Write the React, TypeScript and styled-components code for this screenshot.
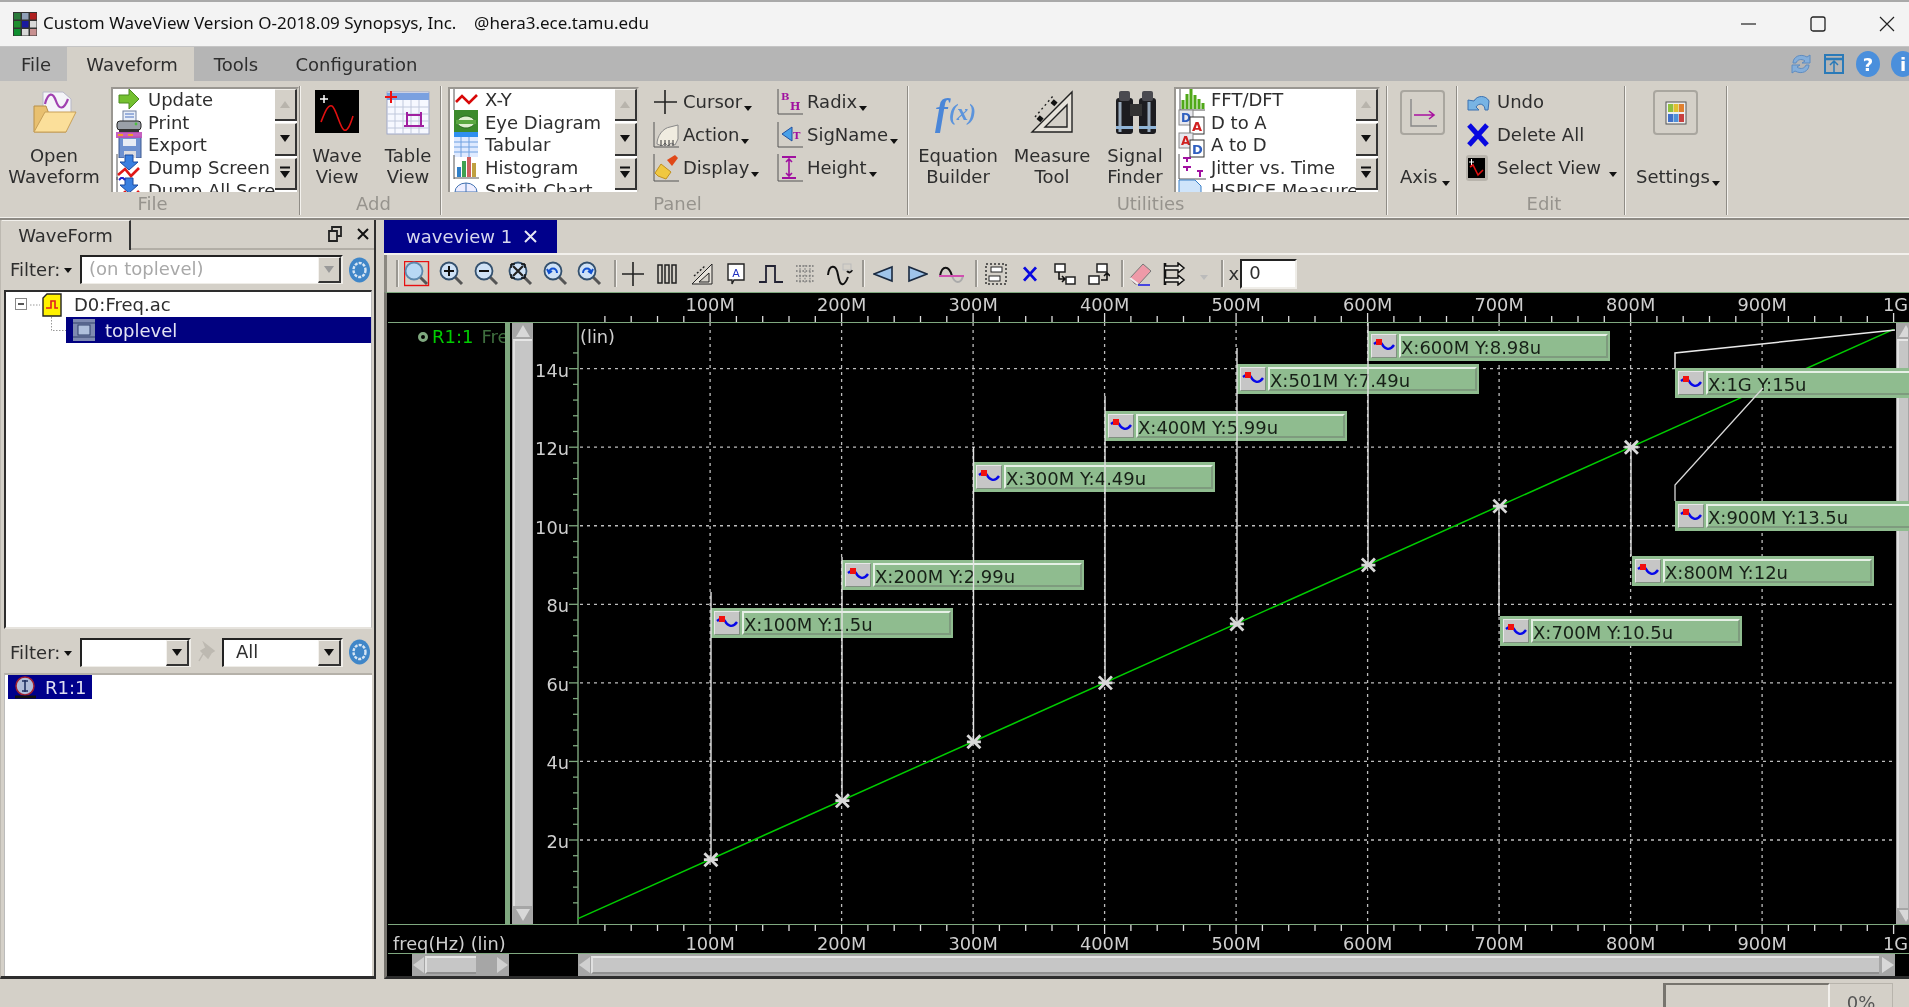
import React from "react";
import styled, { createGlobalStyle } from "styled-components";

const Global = createGlobalStyle`
  html, body { margin: 0; padding: 0; width: 1909px; height: 1007px; overflow: hidden; background: #d4d0c8; }
  #root { width: 1909px; height: 1007px; }
  * { box-sizing: border-box; }
`;

const FONT = `"DejaVu Sans", "Liberation Sans", sans-serif`;

const Win = styled.div`
  width: 1909px; height: 1007px; display: flex; flex-direction: column; overflow: hidden;
  background: #d4d0c8; font-family: ${FONT}; font-size: 18px; color: #2e2e2e; filter: blur(0.3px);
`;
const TitleBar = styled.div`
  height: 47px; flex: none; background: #f3f3f3; border-top: 2px solid #a9a9a9; border-bottom: 1px solid #c4c4c4;
  display: flex; align-items: center; padding: 0 10px 0 13px; color: #111;
  font-family: "Noto Sans", sans-serif; font-size: 17px;
`;
const TitleText = styled.span` margin-left: 6px; white-space: pre; padding-bottom: 3px; `;
const WinControls = styled.div` margin-left: auto; display: flex; align-items: center; gap: 45px; `;
const WinBtn = styled.div` width: 24px; height: 30px; display: flex; align-items: center; justify-content: center; `;

const MenuBar = styled.div` height: 34px; flex: none; background: #b5b5b5; display: flex; align-items: stretch; position: relative; `;
const MenuTab = styled.div<{ $w: number; $pl?: number; $active?: boolean; $first?: boolean }>`
  width: ${p => p.$w}px; display: flex; align-items: center; justify-content: center; flex: none;
  padding-left: ${p => p.$pl ?? 0}px;
  background: ${p => (p.$active ? "#d4d0c8" : p.$first ? "#bcbcbc" : "transparent")};
`;
const MenuIcons = styled.div` margin-left: auto; display: flex; align-items: center; gap: 11px; margin-right: -6px; `;

const Ribbon = styled.div` height: 139px; flex: none; display: flex; border-bottom: 2px solid #8d8a84; box-shadow: inset 0 -1px 0 #f2f0ec; `;
const Group = styled.div<{ $w: number; $pad?: number }>`
  width: ${p => p.$w}px; flex: none; position: relative; display: flex; flex-direction: column; padding-top: 6px;
  &::after { content: ""; position: absolute; right: 0; top: 5px; bottom: 3px; width: 2px; background: linear-gradient(90deg, #8f8c86 50%, #f4f2ee 50%); }
`;
const GroupBody = styled.div<{ $pad?: number; $gap?: number }>`
  height: 106px; display: flex; align-items: flex-start; padding-left: ${p => p.$pad ?? 0}px; gap: ${p => p.$gap ?? 0}px;
`;
const Caption = styled.div` height: 22px; text-align: center; color: #96938d; line-height: 22px; padding-left: 4px; `;
const BigBtn = styled.div<{ $w: number; $ml?: number }>`
  width: ${p => p.$w}px; margin-left: ${p => p.$ml ?? 0}px; flex: none; display: flex; flex-direction: column; align-items: center;
`;
const BigIcon = styled.div` height: 58px; padding-top: 3px; display: flex; justify-content: center; `;
const BigLabel = styled.div` line-height: 21px; text-align: center; white-space: nowrap; `;

const ListBox = styled.div<{ $w: number; $ml?: number }>`
  width: ${p => p.$w}px; margin-left: ${p => p.$ml ?? 0}px; height: 105px; flex: none; display: flex; background: #fff;
  border-top: 2px solid #9a9791; border-left: 2px solid #9a9791; border-right: 2px solid #cfcbc3; overflow: hidden;
`;
const ListItems = styled.div` flex: 1; min-width: 0; overflow: hidden; padding-left: 3px; margin-top: -1px; `;
const ListRow = styled.div` height: 22.7px; display: flex; align-items: center; gap: 6px; white-space: nowrap; overflow: visible; `;
const RowIcon = styled.div` width: 26px; height: 24px; flex: none; display: flex; align-items: center; justify-content: center; `;
const ListScroll = styled.div` width: 22px; flex: none; display: flex; flex-direction: column; background: #fff; `;
const ScrollBtn = styled.div`
  flex: 1; background: #d4d0c8; border-right: 2px solid #333; border-bottom: 2px solid #333; border-top: 1px solid #f0eee9;
  margin-bottom: 2px; display: flex; align-items: center; justify-content: center;
`;

const SmallGrid = styled.div` display: grid; grid-template-columns: 124px 110px; grid-auto-rows: 33px; margin: -2px 0 0 14px; `;
const SmallCol = styled.div` display: grid; grid-auto-rows: 33px; margin-top: -2px; `;
const SmallItem = styled.div` display: flex; align-items: center; white-space: nowrap; `;
const SmallIcon = styled.div<{ $w?: number }>` width: ${p => p.$w ?? 30}px; flex: none; height: 26px; display: flex; align-items: center; `;
const Caret = styled.i<{ $ml?: number }>`
  display: inline-block; width: 0; height: 0; margin-left: ${p => p.$ml ?? 2}px; margin-top: 13px; flex: none;
  border-left: 4px solid transparent; border-right: 4px solid transparent; border-top: 5px solid #111;
`;
const FilterCaret = styled(Caret)` margin-top: 2px; `;
const FrameBtn = styled.div`
  width: 45px; height: 45px; border: 2px solid #a9a69f; border-radius: 4px; display: flex; align-items: center; justify-content: center;
`;
const TextWithCaret = styled.div<{ $ml: number }>` display: flex; align-items: center; margin-left: ${p => p.$ml}px; margin-top: 31px; line-height: 21px; white-space: nowrap; `;
const FrameWrap = styled.div<{ $ml: number }>` margin-left: ${p => p.$ml}px; margin-top: 3px; `;

const Main = styled.div` flex: 1; min-height: 0; display: flex; `;
const Dock = styled.div`
  width: 376px; flex: none; display: flex; flex-direction: column; border-right: 2px solid #2d2d2d; border-bottom: 3px solid #2d2d2d;
  border-left: 1px solid #bdb9b1;
`;
const DockHead = styled.div` height: 30px; flex: none; display: flex; align-items: stretch; position: relative; padding-left: 1px; `;
const DockTab = styled.div` width: 129px; display: flex; align-items: center; justify-content: center; border-right: 2px solid #333; border-top: 1px solid #f2f0ec; `;
const DockIcons = styled.div` flex: 1; display: flex; align-items: center; justify-content: flex-end; gap: 14px; padding-right: 4px; border-bottom: 2px solid #b2aea6; `;
const FilterRow = styled.div<{ $h: number; $top: number }>`
  height: ${p => p.$h}px; flex: none; display: flex; align-items: center; padding: ${p => p.$top}px 0 0 9px;
`;
const FilterLabel = styled.div` width: 56px; flex: none; display: flex; align-items: center; `;
const FilterText = styled.span``;
const Combo = styled.div<{ $w: number; $disabled?: boolean; $ml?: number }>`
  width: ${p => p.$w}px; height: 29px; flex: none; margin-left: ${p => p.$ml ?? 14}px; display: flex; background: #fff;
  border-top: 2px solid #222; border-left: 2px solid #222; border-bottom: 1px solid #efede8; border-right: 2px solid #efede8;
`;
const ComboText = styled.div<{ $dim?: boolean; $pl?: number }>` flex: 1; padding-left: ${p => p.$pl ?? 7}px; line-height: 24px; color: ${p => (p.$dim ? "#a8a8a8" : "#2e2e2e")}; white-space: nowrap; overflow: hidden; `;
const ComboBtn = styled.div`
  width: 23px; flex: none; background: #d4d0c8; display: flex; align-items: center; justify-content: center;
  border-right: 2px solid #333; border-bottom: 2px solid #333; border-top: 1px solid #f4f2ee; border-left: 1px solid #f4f2ee;
`;
const Gear = styled.div` margin-left: 6px; flex: none; display: flex; `;
const PinSlot = styled.div` width: 31px; flex: none; display: flex; justify-content: center; `;

const TreePane = styled.div`
  height: 339px; flex: none; margin: 5px 2px 0 3px; background: #fff; border-top: 2px solid #2d2d2d; border-left: 2px solid #2d2d2d;
  border-right: 1px solid #bbb; border-bottom: 2px solid #e6e3dd; position: relative;
`;
const TreeItem = styled.div` display: flex; margin-left: 45px; `;
const TreeRow = styled.div`
  flex: 1; height: 26px; display: flex; align-items: center; gap: 10px;
  background: #000080; color: #e2e2f4; padding-left: 7px;
`;
const TreeHead = styled.div` height: 25px; display: flex; align-items: center; padding-left: 9px; gap: 2px; `;
const TreeName = styled.span` margin-left: 10px; `;
const ListPane = styled.div`
  flex: 1; min-height: 0; margin: 3px 2px 0 3px; background: #fff; border-top: 2px solid #b5b1a9; border-left: 1px solid #bbb; padding: 0 0 0 3px;
`;
const Chip = styled.div`
  width: 84px; height: 24px; background: #00008b; color: #dfdff2; display: flex; align-items: center; padding-left: 7px; gap: 9px;
`;

const Right = styled.div` flex: 1; min-width: 0; margin-left: 8px; display: flex; flex-direction: column; `;
const TabStrip = styled.div` height: 35px; flex: none; border-bottom: 2px solid #f2f0ec; `;
const ViewTab = styled.div`
  width: 173px; height: 33px; background: #00008b; color: #d7d7ee; display: flex; align-items: center; padding-left: 22px; gap: 12px; white-space: nowrap;
`;
const Toolbar = styled.div` height: 37px; flex: none; display: flex; align-items: center; padding-left: 9px; border-left: 3px solid #8a8780; `;
const ToolSep = styled.div<{ $mr: number; $ml?: number }>`
  width: 2px; height: 27px; flex: none; background: #9a9791; box-shadow: 1px 0 0 #f2f0ec; margin-right: ${p => p.$mr}px; margin-left: ${p => p.$ml ?? 0}px;
`;
const Tool = styled.div<{ $w?: number }>` width: ${p => p.$w ?? 34.5}px; height: 30px; flex: none; display: flex; align-items: center; justify-content: center; `;
const XBox = styled.div`
  width: 57px; height: 30px; flex: none; background: #fff; margin-left: 1px; padding-left: 7px; line-height: 24px;
  border-top: 2px solid #222; border-left: 2px solid #222; border-bottom: 2px solid #efede8; border-right: 2px solid #efede8;
`;
const XMark = styled.span` margin-left: 6px; `;

const Plot = styled.div`
  flex: 1; min-height: 0; position: relative; display: flex; flex-direction: column; background: #000; overflow: hidden;
  border-left: 3px solid #77746e; border-bottom: 3px solid #2d2d2d; border-top: 1px solid #7fa87f;
`;
const PlotInner = styled.div` flex: 1; min-height: 0; display: flex; flex-direction: column; margin-left: 1px; `;
const AxisSvg = styled.svg` display: block; flex: none; `;
const MidRow = styled.div` height: 601px; flex: none; display: flex; `;
const SignalCol = styled.div`
  width: 117px; overflow: hidden; display: flex; align-items: center; height: 27px; padding-left: 30px; gap: 4px; white-space: nowrap; color: #00cc00; 
`;
const SignalWrap = styled.div` width: 117px; flex: none; `;
const SignalDot = styled.i` width: 10px; height: 10px; flex: none; border-radius: 50%; border: 3px solid #7fa87f; `;
const Dim = styled.span` color: #3f6f3f; margin-left: 4px; `;
const Splitter = styled.div` width: 5px; flex: none; background: #7fa87f; margin-right: 2px; `;
const VScroll = styled.div<{ $w: number }>`
  width: ${p => p.$w}px; flex: none; background: #a6a6a6; display: flex; flex-direction: column; align-items: center; padding: 0 1px;
`;
const VThumb = styled.div` flex: 1; width: 100%; background: #c6c6c6; border-top: 2px solid #e6e6e6; border-left: 2px solid #e0e0e0; `;
const ArrowSlot = styled.div<{ $h: number }>` height: ${p => p.$h}px; flex: none; display: flex; align-items: center; justify-content: center; `;
const ChartSvg = styled.svg` display: block; flex: none; `;
const HRow = styled.div` height: 22px; flex: none; display: flex; background: #000; `;
const HGap = styled.div<{ $w: number }>` width: ${p => p.$w}px; flex: none; `;
const HBar = styled.div<{ $w: number }>`
  width: ${p => p.$w}px; flex: none; background: #a6a6a6; display: flex; align-items: center;
`;
const HThumb = styled.div<{ $w: number }>`
  width: ${p => p.$w}px; height: 18px; flex: none; background: #c6c6c6; border-top: 2px solid #e6e6e6; border-left: 2px solid #e0e0e0; border-bottom: 2px solid #909090;
`;
const HEnd = styled.div` margin-left: auto; display: flex; `;
const Overlay = styled.svg` position: absolute; left: 1px; top: 0; pointer-events: none; `;
const Marker = styled.div<{ $x: number; $y: number; $w: number }>`
  position: absolute; left: ${p => p.$x}px; top: ${p => p.$y}px; width: ${p => p.$w}px; height: 30px; background: #8fbc8f;
  display: flex; padding: 3px 2px 3px 3px; gap: 2px; color: #172017;
`;
const MarkerIcon = styled.div`
  width: 26px; flex: none; background: #c6c6c6; border-top: 1px solid #e8e8e8; border-left: 1px solid #e8e8e8; border-right: 1px solid #808f80; border-bottom: 1px solid #808f80;
  display: flex; align-items: center; justify-content: center;
`;
const MarkerText = styled.div`
  flex: 1; line-height: 24px; padding-left: 0; white-space: nowrap; overflow: hidden;
  border-top: 2px solid #e6f0e6; border-left: 2px solid #e6f0e6; border-right: 2px solid #7e9b7e; border-bottom: 2px solid #7e9b7e;
`;

const Status = styled.div` height: 28px; flex: none; display: flex; justify-content: flex-end; padding: 4px 16px 0 0; `;
const Progress = styled.div` width: 230px; height: 30px; flex: none; display: flex; `;
const ProgressBar = styled.div` width: 167px; flex: none; border-top: 2px solid #77746e; border-left: 3px solid #77746e; border-right: 2px solid #f2f0ec; `;
const ProgressPct = styled.div` flex: 1; text-align: center; color: #555; line-height: 30px; padding-top: 4px; border-top: 1px solid #b8b4ac; border-right: 1px solid #b8b4ac; `;

/* ---------- drawings ---------- */
const S = ({ w, h, children }: { w: number; h: number; children: React.ReactNode }) => (
  <svg width={w} height={h} viewBox={`0 0 ${w} ${h}`} style={{ flex: "none" }}>{children}</svg>
);

const AppIcon = () => (
  <S w={24} h={24}>
    <rect width="24" height="24" fill="#333" />
    {[
      ["#2a7a3a", 1, 1], ["#8fa0b8", 9, 1], ["#b02020", 17, 1],
      ["#1f8f2f", 1, 9], ["#1a1aa0", 9, 9], ["#d8d8d8", 17, 9],
      ["#0f8f2f", 1, 17], ["#d8d8d8", 9, 17], ["#c89090", 17, 17],
    ].map(([c, x, y], i) => <rect key={i} x={x as number} y={y as number} width="6.5" height="6.5" fill={c as string} />)}
  </S>
);
const FolderIcon = () => (
  <S w={46} h={44}>
    <path d="M12 2h20l8 7v22H12z" fill="#f4f4f8" stroke="#b8b8c8" />
    <path d="M14 14c3-12 8-12 11-3s8 9 12-2" fill="none" stroke="#a040b0" strokeWidth="2.2" />
    <path d="M3 16v26h32V24H18l-3-8z" fill="#e8c070" stroke="#b89048" />
    <path d="M3 42l11-20h31L35 42z" fill="#fbdf9a" stroke="#c8a058" />
  </S>
);
const WaveIcon = () => (
  <S w={44} h={43}>
    <rect width="44" height="43" fill="#000" />
    <path d="M5 9h8M9 5v8" stroke="#fff" strokeWidth="1.5" />
    <path d="M6 32C10 22 13 14 17 16s8 22 12 24 7-8 9-14" fill="none" stroke="#e01010" strokeWidth="1.6" />
  </S>
);
const TableIcon = () => (
  <S w={46} h={46}>
    <rect x="2" y="2" width="42" height="42" fill="#f6f8ff" stroke="#9fa8c8" />
    <rect x="2" y="3" width="42" height="7" fill="#7aa0e0" />
    <path d="M2 17h42M2 24h42M2 31h42M2 38h42M10 10v34M18 10v34M26 10v34M34 10v34" stroke="#c0c8dc" />
    <path d="M22 25h14v11H22zM22 25v-3M36 25v-3M22 36h-3M36 36h3" fill="none" stroke="#a020a0" strokeWidth="2" />
    <path d="M0 7h12M6 1v12" stroke="#ee1010" strokeWidth="2" />
  </S>
);
const UpdateI = () => (
  <S w={24} h={24}><path d="M2 8h10V2l10 10-10 10v-6H2z" fill="#74c030" stroke="#4c8a20" /></S>
);
const PrintI = () => (
  <S w={26} h={24}>
    <rect x="7" y="1" width="13" height="11" fill="#e8eef8" stroke="#7080a0" />
    <path d="M9 4h9M9 7h9" stroke="#4a70c0" />
    <rect x="1" y="11" width="24" height="9" rx="3" fill="#9aa0a8" stroke="#222" />
    <rect x="3" y="19" width="20" height="4" fill="#333" />
    <circle cx="20" cy="14" r="1.4" fill="#4cc040" />
  </S>
);
const ExportI = () => (
  <S w={26} h={26}>
    <rect x="3" y="5" width="22" height="21" fill="#6f92d0" stroke="#3f5a90" />
    <rect x="8" y="19" width="12" height="7" fill="#dcdce0" />
    <rect x="7" y="7" width="13" height="7" fill="#e8ecf4" />
    <rect x="0" y="0" width="26" height="6" fill="#c050b8" opacity="0.9" />
    <path d="M2 3h5M12 3h5" stroke="#f0a020" strokeWidth="2" />
  </S>
);
const DumpI = ({ all }: { all?: boolean }) => (
  <S w={26} h={26}>
    <path d="M1 0v26" stroke="#555" />
    <path d="M9 1h8v7h5L13 16 4 8h5z" fill="#3a80e0" stroke="#1a4aa0" />
    <path d="M2 21l7-6 6 7 8-8" fill="none" stroke="#e01818" strokeWidth="2.6" />
    {all && <path d="M3 3l3-3 3 3" fill="none" stroke="#22c" strokeWidth="2" />}
  </S>
);
const XYI = () => <S w={26} h={22}><path d="M1 0v22" stroke="#555" /><path d="M3 14l6-6 7 7 8-8" fill="none" stroke="#d80808" strokeWidth="2.6" /></S>;
const EyeI = () => (
  <S w={26} h={26}>
    <rect x="1" y="1" width="24" height="24" fill="#3c8a2c" />
    <path d="M3 13c5-8 15-8 20 0-5 8-15 8-20 0z" fill="#dff0d0" stroke="#2a6a20" />
    <rect x="3" y="11" width="20" height="4" fill="#5aa840" />
  </S>
);
const TabI = () => (
  <S w={26} h={26}>
    <rect x="1" y="0" width="24" height="5" fill="#2f8ff0" />
    <rect x="1" y="5" width="24" height="20" fill="#dfeaff" />
    <path d="M1 10h24M1 15h24M1 20h24M8 5v20M16 5v20" stroke="#6fa0e0" />
  </S>
);
const HistI = () => (
  <S w={26} h={24}>
    <path d="M1 0v24M1 23h25" stroke="#555" />
    <rect x="4" y="12" width="4" height="10" fill="#3080c8" />
    <rect x="9" y="6" width="4" height="16" fill="#40a050" />
    <rect x="14" y="2" width="4" height="20" fill="#d06060" />
    <rect x="19" y="8" width="4" height="14" fill="#c0a040" />
  </S>
);
const SmithI = () => (
  <S w={26} h={24}><ellipse cx="13" cy="14" rx="11" ry="9" fill="#eef" stroke="#4070b0" /><path d="M2 14h22M13 5v18" stroke="#4070b0" /></S>
);
const FftI = () => (
  <S w={26} h={24}>
    <path d="M1 0v23h25" fill="none" stroke="#555" />
    <path d="M4 22v-9M8 22v-15M12 22V1M16 22V8M20 22v-10M24 22v-6" stroke="#50a818" strokeWidth="3" />
  </S>
);
const ConvI = ({ a, b, c1, c2 }: { a: string; b: string; c1: string; c2: string }) => (
  <S w={28} h={26}>
    <rect x="1" y="1" width="14" height="15" fill="#e8e8ee" stroke="#888" />
    <text x="3" y="13" fontSize="12" fontFamily="DejaVu Sans" fontWeight="700" fill={c1}>{a}</text>
    <rect x="12" y="8" width="14" height="17" fill="#fff" stroke="#333" />
    <text x="14" y="22" fontSize="13" fontFamily="DejaVu Sans" fontWeight="700" fill={c2}>{b}</text>
  </S>
);
const JitI = () => (
  <S w={28} h={26}>
    <path d="M1 0v25h27" fill="none" stroke="#555" />
    <path d="M5 4h8M9 4v4M5 13h8M9 13v4M19 17h6M22 17v6" stroke="#a010a0" strokeWidth="2" />
  </S>
);
const MrdI = () => <S w={28} h={24}><path d="M1 10V2h16l6 6v16H1z" fill="#cfe4fa" stroke="#3a80c8" /><rect x="1" y="14" width="22" height="10" fill="#fff" /></S>;
const Tri = ({ up, c = "#111", bar }: { up?: boolean; c?: string; bar?: boolean }) => (
  <S w={12} h={bar ? 14 : 9}>
    {bar && <path d="M1 1.5h10" stroke={c} strokeWidth="2" />}
    <path d={up ? "M1 8h10L6 1z" : bar ? "M1 5h10l-5 7z" : "M1 1h10L6 8z"} fill={c} />
  </S>
);
const CursorI = () => <S w={24} h={26}><path d="M1 13h23M12 1v24" stroke="#222" strokeWidth="1.6" /></S>;
const ActionI = () => (
  <S w={26} h={26}>
    <path d="M1 0v25h25" fill="none" stroke="#555" />
    <path d="M4 22c0-8 6-16 13-17l8-2v14l-3 6-4-2-3 3-3-3-3 3z" fill="#f0ece0" stroke="#888" />
    <path d="M8 24v-6M12 24v-6M16 24v-6M20 24v-6" stroke="#333" />
  </S>
);
const DisplayI = () => (
  <S w={26} h={28}>
    <path d="M1 0v27h25" fill="none" stroke="#555" />
    <path d="M14 6l8-5 3 3-6 8z" fill="#e04818" />
    <path d="M8 10l10 8-5 7-8-3-3-3z" fill="#f0c840" stroke="#c09020" />
  </S>
);
const RadixI = () => (
  <S w={26} h={26}>
    <path d="M1 0v25h25" fill="none" stroke="#555" />
    <text x="4" y="11" fontSize="10" fontFamily="DejaVu Serif" fontWeight="700" fill="#a010a0">B</text>
    <text x="13" y="21" fontSize="11" fontFamily="DejaVu Serif" fontWeight="700" fill="#a010a0">H</text>
  </S>
);
const SigI = () => (
  <S w={26} h={26}>
    <path d="M1 0v25h25" fill="none" stroke="#555" />
    <path d="M5 12l10-7v14z" fill="#48a0e8" stroke="#2050a0" />
    <text x="16" y="17" fontSize="10" fontFamily="DejaVu Serif" fontWeight="700" fill="#a010a0">T</text>
  </S>
);
const HeightI = () => (
  <S w={26} h={28}>
    <path d="M1 0v27h25" fill="none" stroke="#555" />
    <path d="M5 3h14M5 24h14" stroke="#a010a0" strokeWidth="2" />
    <path d="M12 5v17M9 8l3-3 3 3M9 19l3 3 3-3" fill="none" stroke="#a010a0" strokeWidth="1.6" />
  </S>
);
const FxI = () => (
  <S w={50} h={46}>
    <text x="2" y="35" fontFamily="Liberation Serif" fontStyle="italic" fontWeight="700" fontSize="38" fill="#4a86d8">f</text>
    <text x="16" y="30" fontFamily="Liberation Serif" fontStyle="italic" fontWeight="700" fontSize="23" fill="#5c94dc">(x)</text>
  </S>
);
const RulerI = () => (
  <S w={44} h={44}>
    <path d="M42 2v40H2z" fill="#e6e2da" stroke="#222" strokeWidth="1.4" />
    <path d="M37 15v22H15z" fill="#d4d0c8" stroke="#222" strokeWidth="1.4" />
    <path d="M5 27l18-21" stroke="#222" strokeDasharray="2 3" strokeWidth="1.4" />
    <rect x="22" y="10" width="5" height="5" fill="#111" transform="rotate(40 24 12)" />
    <rect x="8" y="26" width="5" height="5" fill="#111" transform="rotate(40 10 28)" />
  </S>
);
const BinoI = () => (
  <S w={44} h={46}>
    <rect x="3" y="8" width="17" height="36" rx="3" fill="#1c1c20" />
    <rect x="26" y="8" width="17" height="36" rx="3" fill="#1c1c20" />
    <rect x="6" y="1" width="11" height="10" rx="2" fill="#4a4a50" />
    <rect x="29" y="1" width="11" height="10" rx="2" fill="#4a4a50" />
    <rect x="17" y="14" width="12" height="12" fill="#333" />
    <path d="M7 12v30M36 12v30" stroke="#9ab" strokeWidth="3" />
    <rect x="3" y="36" width="17" height="3" fill="#8fb4d8" /><rect x="26" y="36" width="17" height="3" fill="#8fb4d8" />
  </S>
);
const AxisI = () => (
  <S w={30} h={30}>
    <path d="M3 1v27h26" fill="none" stroke="#888" strokeWidth="1.4" />
    <path d="M6 17h20M21 13l5 4-5 4" fill="none" stroke="#a810a0" strokeWidth="1.6" />
  </S>
);
const SettingsI = () => (
  <S w={22} h={24}>
    <rect x="1" y="1" width="20" height="22" fill="#eee" stroke="#555" />
    <rect x="3" y="3" width="5" height="8" fill="#90c040" /><rect x="8.5" y="3" width="5" height="8" fill="#e0c030" /><rect x="14" y="3" width="5" height="8" fill="#e08030" />
    <rect x="3" y="13" width="5" height="8" fill="#4070c8" /><rect x="8.5" y="13" width="5" height="8" fill="#5090d8" /><rect x="14" y="13" width="5" height="8" fill="#c84040" />
  </S>
);
const UndoI = () => (
  <S w={24} h={20}>
    <path d="M2 18V8l6 1c3-6 12-6 15 0l-1 9h-3c0-6-6-8-9-3l3 3z" fill="#78b4e4" stroke="#3a70b0" />
  </S>
);
const DelI = ({ s = 24, w = 5 }: { s?: number; w?: number }) => (
  <svg width={s} height={s} viewBox="0 0 24 24"><path d="M3 2l18 20M21 2L3 22" stroke="#0808e0" strokeWidth={w} /></svg>
);
const SelI = () => (
  <S w={22} h={26}>
    <rect x="0" y="0" width="22" height="26" rx="3" fill="#b8b4ac" />
    <rect x="2" y="3" width="17" height="20" fill="#000" />
    <path d="M3 7h5M5.5 4v6" stroke="#fff" />
    <path d="M4 12l3-2 5 10 5-5" fill="none" stroke="#e01010" strokeWidth="1.6" />
  </S>
);
const GearI = () => (
  <svg width="21" height="26" viewBox="0 0 21 26">
    <ellipse cx="10.5" cy="13" rx="10.5" ry="12.5" fill="#3f86c8" />
    <ellipse cx="10.5" cy="13" rx="6" ry="7" fill="none" stroke="#d7e6f4" strokeWidth="2.4" strokeDasharray="3 1.2" />
    <ellipse cx="10.5" cy="13" rx="3" ry="3.6" fill="#3f86c8" />
  </svg>
);
const PinI = () => (
  <S w={20} h={22}><path d="M7 2l10 8-3 2-3 5-7-7 5-3zM6 13l-4 7" fill="#bdb9b1" stroke="#bdb9b1" strokeWidth="1.5" /></S>
);
const RefreshI = () => (
  <S w={22} h={24}>
    <path d="M3 11c0-6 7-10 14-6l3-2v8h-8l3-2c-4-3-8-1-9 2zM19 13c0 6-7 10-14 6l-3 2v-8h8l-3 2c4 3 8 1 9-2z" fill="#84aeda" stroke="#5f8cc0" />
  </S>
);
const WinUpI = () => (
  <S w={22} h={22}>
    <rect x="2" y="2" width="18" height="18" fill="none" stroke="#2a7ab8" strokeWidth="2" />
    <path d="M2 6h18" stroke="#2a7ab8" strokeWidth="2.5" /><path d="M11 19V9M7 12l4-4 4 4" fill="none" stroke="#2a7ab8" strokeWidth="1.5" />
  </S>
);
const RoundI = ({ t }: { t: string }) => (
  <svg width="24" height="26" viewBox="0 0 24 26" style={{ flex: "none" }}>
    <ellipse cx="12" cy="13" rx="12" ry="13" fill="#4a8fdc" />
    <text x="12" y="20" textAnchor="middle" fontFamily="DejaVu Sans" fontWeight="700" fontSize="18" fill="#fff">{t}</text>
  </svg>
);
const Mag = ({ children, box }: { children?: React.ReactNode; box?: boolean }) => (
  <S w={26} h={26}>
    {box && <rect x="0.5" y="0.5" width="24" height="24" fill="none" stroke="#e81010" strokeWidth="1.4" />}
    <path d="M16 16l7 7" stroke="#555" strokeWidth="3" />
    <circle cx="10" cy="10" r="8.5" fill={box ? "#b8d8f4" : "#cfe2f6"} stroke={box ? "#5e88ac" : "#33506e"} strokeWidth="1.8" />
    {children}
  </S>
);
const MiniTri = ({ dir }: { dir: "l" | "r" }) => (
  <S w={20} h={18}>
    <path d={dir === "l" ? "M1 9l18-7v14z" : "M19 9L1 2v14z"} fill="#9fc4ea" stroke="#1a2a40" strokeWidth="1.6" />
  </S>
);
const MarkWave = () => (
  <S w={22} h={16}>
    <path d="M1 6c4-3 6-4 8 0s7 8 12 1" fill="none" stroke="#0808e8" strokeWidth="2.4" />
    <rect x="3" y="1" width="6" height="6" fill="#f01010" />
  </S>
);

/* ---------- chart data ---------- */
const px = (m: number) => 578.6 + (m * 131.5) / 100;
const py = (u: number) => 840 - (u - 2) * 39.28;
const GREEN = "#7fa87f";
const T0 = 293, L0 = 388;
const xs = Array.from({ length: 51 }, (_, i) => i * 20);
const points = [100, 200, 300, 400, 500, 600, 700, 800];
const markers = [
  { t: "X:100M Y:1.5u", x: 711, y: 608, w: 242 },
  { t: "X:200M Y:2.99u", x: 842, y: 560, w: 242 },
  { t: "X:300M Y:4.49u", x: 973, y: 462, w: 242 },
  { t: "X:400M Y:5.99u", x: 1105, y: 411, w: 242 },
  { t: "X:501M Y:7.49u", x: 1237, y: 364, w: 242 },
  { t: "X:600M Y:8.98u", x: 1368, y: 331, w: 242 },
  { t: "X:700M Y:10.5u", x: 1500, y: 616, w: 242 },
  { t: "X:800M Y:12u", x: 1632, y: 556, w: 242 },
  { t: "X:900M Y:13.5u", x: 1675, y: 501, w: 242 },
  { t: "X:1G Y:15u", x: 1675, y: 368, w: 242 },
];
const leaders = [
  [711, 859, 592], [842, 801, 557], [973.5, 742, 447], [1105, 683, 396],
  [1237, 624, 348], [1368, 565, 323], [1499, 507, 616], [1631, 449, 556],
];
const AxisText = styled.text` font-family: ${FONT}; font-size: 17.8px; fill: #cfcfcf; `;

const XAxis = ({ top }: { top: boolean }) => {
  const H = 30;
  return (
    <AxisSvg width={1521} height={H} viewBox={`${L0} 0 1521 ${H}`}>
      {top ? <path d={`M${L0} 29.5h1521`} stroke={GREEN} /> : <path d={`M${L0} 0.5h1521M${L0} 29.5h1521`} stroke={GREEN} />}
      {xs.map(m => {
        const major = m % 100 === 0 && m > 0;
        if (m === 0) return null;
        return top
          ? <path key={m} d={`M${px(m)} ${major ? 20 : 23}V29`} stroke="#ddd" strokeWidth="1.3" />
          : <path key={m} d={`M${px(m)} 1V${major ? 10 : 7}`} stroke="#ddd" strokeWidth="1.3" />;
      })}
      {Array.from({ length: 10 }, (_, i) => (i + 1) * 100).map(m => (
        <AxisText key={m} x={px(m) + (m === 1000 ? 2 : 0)} y={top ? 18 : 26} textAnchor="middle">{m === 1000 ? "1G" : `${m}M`}</AxisText>
      ))}
      {!top && <AxisText x={393} y={26}>freq(Hz) (lin)</AxisText>}
    </AxisSvg>
  );
};

const Chart = () => {
  const ys = Array.from({ length: 37 }, (_, i) => i * 0.4);
  const ox = 533, oy = 323;
  return (
    <ChartSvg width={1363} height={601} viewBox={`${ox} ${oy} 1363 601`}>
      {[2, 4, 6, 8, 10, 12, 14].map(u => (
        <path key={u} d={`M580 ${py(u)}H1895`} stroke="#bdbdbd" strokeWidth="1.3" strokeDasharray="3 4" />
      ))}
      {Array.from({ length: 9 }, (_, i) => (i + 1) * 100).map(m => (
        <path key={m} d={`M${px(m)} ${oy}V923`} stroke="#bdbdbd" strokeWidth="1.3" strokeDasharray="3 4" />
      ))}
      <path d={`M578 ${oy}V924`} stroke={GREEN} strokeWidth="1.4" />
      {ys.map(u => {
        const maj = Math.abs(u / 2 - Math.round(u / 2)) < 1e-6;
        if (u === 0) return null;
        return <path key={u} d={`M${maj ? 569 : 573} ${py(u)}H578`} stroke={GREEN} strokeWidth="1.3" />;
      })}
      {[2, 4, 6, 8, 10, 12, 14].map(u => (
        <AxisText key={u} x={569} y={py(u) + 8} textAnchor="end">{u}u</AxisText>
      ))}
      <AxisText x={580} y={343}>(lin)</AxisText>
      <path d={`M578 ${py(0)}L${px(1000)} ${py(15)}`} stroke="#00cc00" strokeWidth="1.5" />
    </ChartSvg>
  );
};

const Mark = ({ x, y }: { x: number; y: number }) => (
  <g stroke="#d8d8d8" strokeWidth="2.8">
    <path d={`M${x - 6.5} ${y - 6.5}L${x + 6.5} ${y + 6.5}M${x + 6.5} ${y - 6.5}L${x - 6.5} ${y + 6.5}M${x - 7} ${y}H${x + 7}`} />
  </g>
);

const App: React.FC = () => (
  <Win>
    <Global />
    <TitleBar>
      <AppIcon />
      <TitleText>Custom WaveView Version O-2018.09 Synopsys, Inc.    @hera3.ece.tamu.edu</TitleText>
      <WinControls>
        <WinBtn><S w={16} h={16}><path d="M0 8h15" stroke="#222" strokeWidth="1.2" /></S></WinBtn>
        <WinBtn><S w={16} h={16}><rect x="1" y="1" width="14" height="14" rx="2" fill="none" stroke="#222" strokeWidth="1.3" /></S></WinBtn>
        <WinBtn><S w={16} h={16}><path d="M1 1l14 14M15 1L1 15" stroke="#222" strokeWidth="1.2" /></S></WinBtn>
      </WinControls>
    </TitleBar>

    <MenuBar>
      <MenuTab $w={67} $pl={5} $first>File</MenuTab>
      <MenuTab $w={127} $pl={3} $active>Waveform</MenuTab>
      <MenuTab $w={84}>Tools</MenuTab>
      <MenuTab $w={157}>Configuration</MenuTab>
      <MenuIcons>
        <RefreshI /><WinUpI /><RoundI t="?" /><RoundI t="i" />
      </MenuIcons>
    </MenuBar>

    <Ribbon>
      <Group $w={301}>
        <GroupBody>
          <BigBtn $w={108}>
            <BigIcon><FolderIcon /></BigIcon>
            <BigLabel>Open<br />Waveform</BigLabel>
          </BigBtn>
          <ListBox $w={188} $ml={3}>
            <ListItems>
              <ListRow><RowIcon><UpdateI /></RowIcon>Update</ListRow>
              <ListRow><RowIcon><PrintI /></RowIcon>Print</ListRow>
              <ListRow><RowIcon><ExportI /></RowIcon>Export</ListRow>
              <ListRow><RowIcon><DumpI /></RowIcon>Dump Screen</ListRow>
              <ListRow><RowIcon><DumpI all /></RowIcon>Dump All Screens</ListRow>
            </ListItems>
            <ListScroll>
              <ScrollBtn><Tri up c="#b8b4ac" /></ScrollBtn>
              <ScrollBtn><Tri /></ScrollBtn>
              <ScrollBtn><Tri bar /></ScrollBtn>
            </ListScroll>
          </ListBox>
        </GroupBody>
        <Caption>File</Caption>
      </Group>

      <Group $w={141}>
        <GroupBody $pad={6} $gap={11}>
          <BigBtn $w={60}><BigIcon><WaveIcon /></BigIcon><BigLabel>Wave<br />View</BigLabel></BigBtn>
          <BigBtn $w={60}><BigIcon><TableIcon /></BigIcon><BigLabel>Table<br />View</BigLabel></BigBtn>
        </GroupBody>
        <Caption>Add</Caption>
      </Group>

      <Group $w={467}>
        <GroupBody $pad={6}>
          <ListBox $w={191}>
            <ListItems>
              <ListRow><RowIcon><XYI /></RowIcon>X-Y</ListRow>
              <ListRow><RowIcon><EyeI /></RowIcon>Eye Diagram</ListRow>
              <ListRow><RowIcon><TabI /></RowIcon>Tabular</ListRow>
              <ListRow><RowIcon><HistI /></RowIcon>Histogram</ListRow>
              <ListRow><RowIcon><SmithI /></RowIcon>Smith Chart</ListRow>
            </ListItems>
            <ListScroll>
              <ScrollBtn><Tri up c="#b8b4ac" /></ScrollBtn>
              <ScrollBtn><Tri /></ScrollBtn>
              <ScrollBtn><Tri bar /></ScrollBtn>
            </ListScroll>
          </ListBox>
          <SmallGrid>
            <SmallItem><SmallIcon><CursorI /></SmallIcon>Cursor<Caret /></SmallItem>
            <SmallItem><SmallIcon><RadixI /></SmallIcon>Radix<Caret /></SmallItem>
            <SmallItem><SmallIcon><ActionI /></SmallIcon>Action<Caret /></SmallItem>
            <SmallItem><SmallIcon><SigI /></SmallIcon>SigName<Caret /></SmallItem>
            <SmallItem><SmallIcon><DisplayI /></SmallIcon>Display<Caret /></SmallItem>
            <SmallItem><SmallIcon><HeightI /></SmallIcon>Height<Caret /></SmallItem>
          </SmallGrid>
        </GroupBody>
        <Caption>Panel</Caption>
      </Group>

      <Group $w={479}>
        <GroupBody $pad={7}>
          <BigBtn $w={84}><BigIcon><FxI /></BigIcon><BigLabel>Equation<br />Builder</BigLabel></BigBtn>
          <BigBtn $w={76} $ml={14}><BigIcon><RulerI /></BigIcon><BigLabel>Measure<br />Tool</BigLabel></BigBtn>
          <BigBtn $w={60} $ml={15}><BigIcon><BinoI /></BigIcon><BigLabel>Signal<br />Finder</BigLabel></BigBtn>
          <ListBox $w={206} $ml={9}>
            <ListItems>
              <ListRow><RowIcon><FftI /></RowIcon>FFT/DFT</ListRow>
              <ListRow><RowIcon><ConvI a="D" b="A" c1="#3060c0" c2="#d02020" /></RowIcon>D to A</ListRow>
              <ListRow><RowIcon><ConvI a="A" b="D" c1="#d02020" c2="#3060c0" /></RowIcon>A to D</ListRow>
              <ListRow><RowIcon><JitI /></RowIcon>Jitter vs. Time</ListRow>
              <ListRow><RowIcon><MrdI /></RowIcon>HSPICE Measure</ListRow>
            </ListItems>
            <ListScroll>
              <ScrollBtn><Tri up c="#b8b4ac" /></ScrollBtn>
              <ScrollBtn><Tri /></ScrollBtn>
              <ScrollBtn><Tri bar /></ScrollBtn>
            </ListScroll>
          </ListBox>
        </GroupBody>
        <Caption>Utilities</Caption>
      </Group>

      <Group $w={70}>
        <FrameWrap $ml={12}><FrameBtn><AxisI /></FrameBtn></FrameWrap>
        <TextWithCaret $ml={12}>Axis<Caret $ml={5} /></TextWithCaret>
      </Group>

      <Group $w={168}>
        <GroupBody $pad={8}>
          <SmallCol>
            <SmallItem><SmallIcon $w={31}><UndoI /></SmallIcon>Undo</SmallItem>
            <SmallItem><SmallIcon $w={31}><DelI /></SmallIcon>Delete All</SmallItem>
            <SmallItem><SmallIcon $w={31}><SelI /></SmallIcon>Select View<Caret $ml={8} /></SmallItem>
          </SmallCol>
        </GroupBody>
        <Caption>Edit</Caption>
      </Group>

      <Group $w={102}>
        <FrameWrap $ml={27}><FrameBtn><SettingsI /></FrameBtn></FrameWrap>
        <TextWithCaret $ml={10}>Settings<Caret $ml={2} /></TextWithCaret>
      </Group>
    </Ribbon>

    <Main>
      <Dock>
        <DockHead>
          <DockTab>WaveForm</DockTab>
          <DockIcons>
            <S w={14} h={16}><path d="M4 5V1h9v9H9M1 5h8v10H1z" fill="none" stroke="#222" strokeWidth="1.8" /></S>
            <S w={14} h={14}><path d="M2 2l10 10M12 2L2 12" stroke="#111" strokeWidth="2" /></S>
          </DockIcons>
        </DockHead>
        <FilterRow $h={35} $top={4}>
          <FilterLabel><FilterText>Filter:</FilterText><FilterCaret $ml={4} /></FilterLabel>
          <Combo $w={263}>
            <ComboText $dim>(on toplevel)</ComboText>
            <ComboBtn><Tri c="#999" /></ComboBtn>
          </Combo>
          <Gear><GearI /></Gear>
        </FilterRow>
        <TreePane>
          <TreeHead>
            <S w={13} h={13}><rect x="0.5" y="0.5" width="11" height="11" fill="#fff" stroke="#888" /><path d="M3 6h6" stroke="#111" strokeWidth="1.4" /></S>
            <S w={10} h={4}><path d="M0 2h10" stroke="#999" strokeDasharray="1.5 1.5" /></S>
            <S w={20} h={24}><path d="M5 1h14v22H1V5z" fill="#fff200" stroke="#222" strokeWidth="1.4" /><path d="M4 15h5V8h4v7h3" fill="none" stroke="#e02020" strokeWidth="1.6" /></S>
            <TreeName>D0:Freq.ac</TreeName>
          </TreeHead>
          <TreeItem>
            <S w={15} h={26}><path d="M0.5 0V13.5H15" fill="none" stroke="#999" strokeDasharray="1.5 1.5" /></S>
            <TreeRow>
              <S w={22} h={24}>
                <rect x="0" y="1" width="22" height="22" fill="#7e8ab0" /><rect x="5" y="7" width="12" height="10" fill="#b0c0dc" stroke="#30406a" /><path d="M0 5h22M0 19h22" stroke="#30406a" />
              </S>
              toplevel
            </TreeRow>
          </TreeItem>
        </TreePane>
        <FilterRow $h={41} $top={5}>
          <FilterLabel><FilterText>Filter:</FilterText><FilterCaret $ml={4} /></FilterLabel>
          <Combo $w={111}>
            <ComboText />
            <ComboBtn><Tri /></ComboBtn>
          </Combo>
          <PinSlot><PinI /></PinSlot>
          <Combo $w={121} $ml={0}>
            <ComboText $pl={12}>All</ComboText>
            <ComboBtn><Tri /></ComboBtn>
          </Combo>
          <Gear><GearI /></Gear>
        </FilterRow>
        <ListPane>
          <Chip>
            <S w={21} h={24}>
              <circle cx="10" cy="11" r="9" fill="#b0bcd8" stroke="#a02030" strokeWidth="1.5" /><path d="M10 5v12M7 6h6M7 16h6" stroke="#203060" strokeWidth="1.6" /><path d="M0 22h21" stroke="#111" strokeWidth="3" />
            </S>
            R1:1
          </Chip>
        </ListPane>
      </Dock>

      <Right>
        <TabStrip>
          <ViewTab>waveview 1<S w={13} h={13}><path d="M1 1l11 11M12 1L1 12" stroke="#e6e6f4" strokeWidth="2" /></S></ViewTab>
        </TabStrip>
        <Toolbar>
          <ToolSep $mr={1} />
          <Tool $w={36}><Mag box /></Tool>
          <Tool><Mag><path d="M5 10h10M10 5v10" stroke="#111" strokeWidth="2" /></Mag></Tool>
          <Tool><Mag><path d="M5 10h10" stroke="#111" strokeWidth="2" /></Mag></Tool>
          <Tool><Mag><path d="M5 5l10 10M15 5L5 15" stroke="#222" strokeWidth="2.2" /><path d="M3 3h4M3 3v4M17 3h-4M17 3v4M3 17h4M3 17v-4M17 17h-4M17 17v-4" stroke="#111" strokeWidth="1.5" /></Mag></Tool>
          <Tool><Mag><path d="M6 12c0-6 8-6 8 0M4 8l2 4 3-2" fill="none" stroke="#1050d0" strokeWidth="2" /></Mag></Tool>
          <Tool><Mag><path d="M14 12c0-6-8-6-8 0M16 8l-2 4-3-2" fill="none" stroke="#1050d0" strokeWidth="2" /></Mag></Tool>
          <ToolSep $mr={0} $ml={6} />
          <Tool><S w={24} h={26}><path d="M1 13h22M12 1v24" stroke="#222" strokeWidth="1.6" /></S></Tool>
          <Tool><S w={20} h={20}><path d="M1 1h4v18H1zM8 1h4v18H8zM15 1h4v18h-4z" fill="#d4d0c8" stroke="#222" strokeWidth="1.5" /></S></Tool>
          <Tool><S w={22} h={22}><path d="M21 1v20H1z" fill="#e6e2da" stroke="#222" /><path d="M18 10v9H8z" fill="#d4d0c8" stroke="#222" /><path d="M3 13l11-10" stroke="#222" strokeDasharray="2 2" strokeWidth="1.4" /></S></Tool>
          <Tool><S w={18} h={22}><path d="M1 1h16v16H7l-2 4v-4H1z" fill="#fff" stroke="#222" strokeWidth="1.4" /><text x="9" y="14" textAnchor="middle" fontSize="11" fontFamily="DejaVu Sans" fill="#2030c0">A</text></S></Tool>
          <Tool><S w={26} h={20}><path d="M1 18h7V2h9v16h8" fill="none" stroke="#223" strokeWidth="1.8" /></S></Tool>
          <Tool><S w={20} h={20}><path d="M1 2h18M1 7h18M1 12h18M1 17h18" stroke="#777" strokeWidth="1.6" strokeDasharray="1.6 1.6" /><path d="M5 1v18M10 1v18M15 1v18" stroke="#777" strokeDasharray="1.6 1.6" /></S></Tool>
          <Tool><S w={26} h={24}><path d="M1 13c1-10 8-12 10 0s6 12 10 2 M20 9c2 2 4 2 5 -1" fill="none" stroke="#111" strokeWidth="2" /><rect x="16" y="2" width="8" height="6" fill="none" stroke="#bbb" /></S></Tool>
          <ToolSep $mr={2} $ml={5} />
          <Tool><MiniTri dir="l" /></Tool>
          <Tool><MiniTri dir="r" /></Tool>
          <Tool><S w={26} h={22}><path d="M1 13C3 2 10 2 13 13" fill="none" stroke="#111" strokeWidth="2" /><path d="M13 13c3 8 9 8 11 0" fill="none" stroke="#aaa" strokeWidth="2" /><path d="M0 13h25" stroke="#d050b0" strokeWidth="2" /></S></Tool>
          <ToolSep $mr={2} $ml={5} />
          <Tool><S w={22} h={22}><rect x="1" y="1" width="20" height="20" fill="none" stroke="#333" strokeWidth="1.5" strokeDasharray="2 2" /><rect x="6" y="4" width="11" height="5" fill="#fff" stroke="#222" /><rect x="4" y="13" width="11" height="5" fill="#fff" stroke="#222" /></S></Tool>
          <Tool><DelI s={16} w={4.2} /></Tool>
          <Tool><S w={22} h={22}><rect x="1" y="1" width="10" height="8" fill="#fff" stroke="#222" strokeWidth="1.5" /><rect x="12" y="14" width="9" height="7" fill="#fff" stroke="#222" strokeWidth="1.5" /><path d="M5 9v7h5M8 13l3 3-3 3" fill="none" stroke="#111" strokeWidth="1.6" /></S></Tool>
          <Tool><S w={22} h={22}><rect x="1" y="13" width="10" height="8" fill="#fff" stroke="#222" strokeWidth="1.5" /><rect x="9" y="1" width="10" height="8" fill="#fff" stroke="#222" strokeWidth="1.5" /><path d="M13 17h6v-6M16 13l3-3 3 3" fill="none" stroke="#111" strokeWidth="1.6" /></S></Tool>
          <ToolSep $mr={0} $ml={4} />
          <Tool><S w={24} h={24}><path d="M2 16L15 2l8 7-12 13H7z" fill="#ee9aa8" stroke="#777" /><path d="M2 16l8 6" stroke="#eee" strokeWidth="2" /><path d="M10 23h12" stroke="#1818e8" strokeWidth="1.5" /></S></Tool>
          <Tool><S w={24} h={24}><path d="M3 1v22" stroke="#111" strokeWidth="2.6" /><path d="M3 4h13V1l6 5-6 5V8H3M3 16h13v-3l6 5-6 5v-3H3" fill="#e8e6e0" stroke="#111" strokeWidth="1.5" /></S></Tool>
          <Tool $w={24}><S w={10} h={16}><path d="M1 9h8l-4 5z" fill="#bbb" /></S></Tool>
          <ToolSep $mr={0} $ml={5} />
          <XMark>x</XMark>
          <XBox>0</XBox>
        </Toolbar>
        <Plot>
          <PlotInner>
            <XAxis top />
            <MidRow>
              <SignalWrap>
                <SignalCol>
                  <SignalDot />
                  R1:1<Dim>Freq</Dim>
                </SignalCol>
              </SignalWrap>
              <Splitter />
              <VScroll $w={21}>
                <ArrowSlot $h={16}><S w={16} h={14}><path d="M8 1l7 12H1z" fill="#d8d8d8" /></S></ArrowSlot>
                <VThumb />
                <ArrowSlot $h={18}><S w={16} h={14}><path d="M8 13l7-12H1z" fill="#d8d8d8" /></S></ArrowSlot>
              </VScroll>
              <Chart />
              <VScroll $w={13}>
                <ArrowSlot $h={16}><S w={10} h={14}><path d="M8 1l7 12H1z" fill="#d8d8d8" /></S></ArrowSlot>
                <VThumb />
                <ArrowSlot $h={16}><S w={10} h={14}><path d="M8 13l7-12H1z" fill="#d8d8d8" /></S></ArrowSlot>
              </VScroll>
            </MidRow>
            <XAxis top={false} />
            <HRow>
              <HGap $w={24} />
              <HBar $w={97}>
                <S w={13} h={18}><path d="M1 9l11-8v16z" fill="#d0d0d0" /></S>
                <HThumb $w={51} />
                <HEnd><S w={13} h={18}><path d="M12 9L1 1v16z" fill="#d0d0d0" /></S></HEnd>
              </HBar>
              <HGap $w={69} />
              <HBar $w={1317}>
                <S w={13} h={18}><path d="M1 9l11-8v16z" fill="#d0d0d0" /></S>
                <HThumb $w={1288} />
                <HEnd><S w={14} h={18}><path d="M13 9L1 1v16z" fill="#d8d8d8" /></S></HEnd>
              </HBar>
            </HRow>
          </PlotInner>
          {markers.map(m => (
            <Marker key={m.t} $x={m.x - L0 + 1} $y={m.y - T0} $w={m.w}>
              <MarkerIcon><MarkWave /></MarkerIcon>
              <MarkerText>{m.t}</MarkerText>
            </Marker>
          ))}
          <Overlay width={1521} height={660} viewBox={`${L0} ${T0} 1521 660`}>
            {leaders.map(([x, a, b]) => (
              <path key={x} d={`M${x} ${a}V${b}`} stroke="#e4e4e4" strokeWidth="1.4" fill="none" />
            ))}
            <path d="M1675 501V485L1763 388" stroke="#d8d8d8" strokeWidth="1.3" fill="none" />
            <path d="M1675 368V353L1895 330" stroke="#e8e8e8" strokeWidth="1.5" fill="none" />
            {points.map(m => <Mark key={m} x={px(m) + 0.8} y={py((m / 100) * 1.5)} />)}
          </Overlay>
        </Plot>
      </Right>
    </Main>

    <Status>
      <Progress>
        <ProgressBar />
        <ProgressPct>0%</ProgressPct>
      </Progress>
    </Status>
  </Win>
);

export default App;
